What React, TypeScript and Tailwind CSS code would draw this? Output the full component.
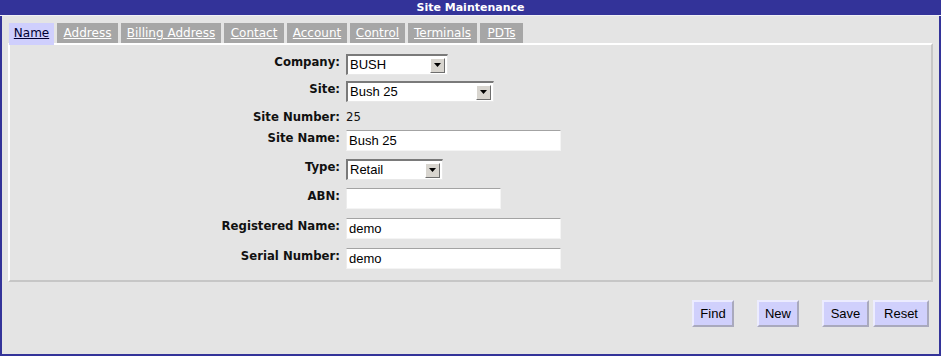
import React from "react";

const tabs = [
  { label: "Name", w: "w-[45px]", active: true },
  { label: "Address", w: "w-[61px]" },
  { label: "Billing Address", w: "w-[100px]" },
  { label: "Contact", w: "w-[60px]" },
  { label: "Account", w: "w-[60px]" },
  { label: "Control", w: "w-[55px]" },
  { label: "Terminals", w: "w-[69px]" },
  { label: "PDTs", w: "w-[43px]" },
];

const tahoma = '"DejaVu Sans Condensed", "DejaVu Sans", Verdana, sans-serif';

function Select({ value, w }: { value: string; w: string }) {
  return (
    <div
      className={`${w} h-[21px] flex items-center bg-white border-t-2 border-l-2 border-b border-r border-t-[#7a7a7a] border-l-[#7a7a7a] border-b-[#e8e8e8] border-r-[#e8e8e8]`}
    >
      <span className="flex-1 pl-[2px] text-[13px] leading-4 text-black">{value}</span>
      <div className="w-[15px] h-[15px] mr-[2px] flex items-center justify-center bg-[#d8d5cf] border border-t-white border-l-white border-b-[#6e6e6e] border-r-[#6e6e6e]">
        <svg width="7" height="4" viewBox="0 0 7 4">
          <path d="M0 0h7L3.5 4z" fill="#000" />
        </svg>
      </div>
    </div>
  );
}

function Input({ value, w }: { value?: string; w: string }) {
  return (
    <div
      className={`${w} h-[21px] flex items-center bg-white border border-t-[#a3a3a3] border-l-[#ececec] border-b-[#f4f4f4] border-r-[#f4f4f4] pl-[2px] text-[13px] leading-4 text-black`}
    >
      {value}
    </div>
  );
}

function Row({ label, mt, children }: { label: string; mt: string; children: React.ReactNode }) {
  return (
    <div className={`flex items-start gap-[6px] ${mt}`}>
      <div
        className="w-[330px] text-right font-bold text-[13px] leading-4 text-[#111]"
        style={{ fontFamily: tahoma }}
      >
        {label}
      </div>
      {children}
    </div>
  );
}

function Btn({ label, w }: { label: string; w: string }) {
  return (
    <button
      className={`${w} h-[27px] bg-[#d0d0fc] border-2 border-t-[#ececff] border-l-[#ececff] border-b-[#a9a9bd] border-r-[#a9a9bd] text-[13px] text-black`}
    >
      {label}
    </button>
  );
}

export default function App() {
  return (
    <div
      className="w-[941px] h-[356px] flex flex-col bg-[#e4e4e4] border-2 border-[#333399]"
      style={{ fontFamily: '"Liberation Sans", Arial, sans-serif' }}
    >
      <div
        className="h-[14px] -mt-[2px] -mx-[2px] pt-[1px] bg-[#333399] text-white text-center font-bold text-[11px] leading-[14px] box-content border-b border-[#f0f0f6]"
        style={{ fontFamily: '"DejaVu Sans", Verdana, sans-serif' }}
      >
        Site Maintenance
      </div>

      <div
        className="flex gap-[3px] ml-[7px] mt-[7px] h-[20px]"
        style={{ fontFamily: '"DejaVu Sans", Verdana, sans-serif' }}
      >
        {tabs.map((t) =>
          t.active ? (
            <div
              key={t.label}
              className={`${t.w} flex items-center justify-center bg-[#cfcffd] text-[12px] underline text-[#000033] relative z-10 -mb-[2px] h-[22px] pb-[2px]`}
            >
              {t.label}
            </div>
          ) : (
            <div
              key={t.label}
              className={`${t.w} flex items-center justify-center bg-[#a6a6a6] text-[12px] underline text-white`}
            >
              {t.label}
            </div>
          )
        )}
      </div>

      <div className="mx-[6px] border-2 border-t-white border-l-white border-b-[#c6c6c6] border-r-[#c6c6c6] pt-[9px] pb-[11px]">
        <Row label="Company:" mt="mt-0">
          <Select value="BUSH" w="w-[102px]" />
        </Row>
        <Row label="Site:" mt="mt-[6px]">
          <Select value="Bush 25" w="w-[148px]" />
        </Row>
        <Row label="Site Number:" mt="mt-[7px]">
          <span className="text-[13px] leading-4 text-[#111]" style={{ fontFamily: tahoma }}>
            25
          </span>
        </Row>
        <Row label="Site Name:" mt="mt-[5px]">
          <Input value="Bush 25" w="w-[215px]" />
        </Row>
        <Row label="Type:" mt="mt-[8px]">
          <Select value="Retail" w="w-[97px]" />
        </Row>
        <Row label="ABN:" mt="mt-[8px]">
          <Input w="w-[155px]" />
        </Row>
        <Row label="Registered Name:" mt="mt-[9px]">
          <Input value="demo" w="w-[215px]" />
        </Row>
        <Row label="Serial Number:" mt="mt-[9px]">
          <Input value="demo" w="w-[215px]" />
        </Row>
      </div>

      <div className="flex justify-end mt-[18px] pr-[10px]">
        <Btn label="Find" w="w-[42px]" />
        <div className="ml-[23px]">
          <Btn label="New" w="w-[42px]" />
        </div>
        <div className="ml-[23px]">
          <Btn label="Save" w="w-[47px]" />
        </div>
        <div className="ml-[4px]">
          <Btn label="Reset" w="w-[56px]" />
        </div>
      </div>
    </div>
  );
}
